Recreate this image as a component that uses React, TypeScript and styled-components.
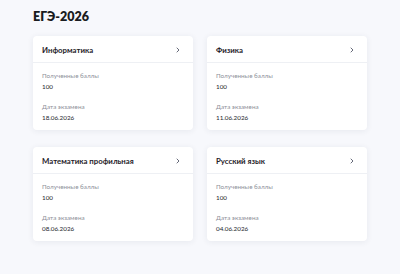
import styled, { createGlobalStyle } from "styled-components";

const exams = [
  { subject: "Информатика", score: 100, date: "18.06.2026" },
  { subject: "Физика", score: 100, date: "11.06.2026" },
  { subject: "Математика профильная", score: 100, date: "08.06.2026" },
  { subject: "Русский язык", score: 100, date: "04.06.2026" },
];

const GlobalStyle = createGlobalStyle`
  body {
    margin: 0;
    background: #f7f8fc;
    font-family: Lato, "Noto Sans", sans-serif;
    color: #1f2229;
  }
`;

function Chevron() {
  return (
    <svg width="4" height="6" viewBox="0 0 4 6" fill="none">
      <path d="M1 1l2 2-2 2" stroke="#55596a" strokeWidth="0.9" strokeLinecap="round" strokeLinejoin="round" />
    </svg>
  );
}

function App() {
  return (
    <Page>
      <GlobalStyle />
      <Heading>ЕГЭ-2026</Heading>
      <Grid>
        {exams.map((exam) => (
          <Card key={exam.subject}>
            <CardHeader>
              <Subject>{exam.subject}</Subject>
              <Chevron />
            </CardHeader>
            <CardBody>
              <Field>
                <Label>Полученные баллы</Label>
                <Value>{exam.score}</Value>
              </Field>
              <Field>
                <Label>Дата экзамена</Label>
                <Value>{exam.date}</Value>
              </Field>
            </CardBody>
          </Card>
        ))}
      </Grid>
    </Page>
  );
}

const Page = styled.div`
  min-height: 274px;
  padding: 8px 33px 0;
  box-sizing: border-box;
`;

const Heading = styled.h1`
  margin: 0;
  font-size: 12.5px;
  line-height: 18px;
  font-weight: 800;
  color: #1a1c21;
`;

const Grid = styled.div`
  display: grid;
  grid-template-columns: 160px 160px;
  column-gap: 14px;
  row-gap: 17px;
  margin-top: 10px;
`;

const Card = styled.div`
  background: #fff;
  border-radius: 4px;
  box-shadow: 0 1px 6px rgba(40, 50, 80, 0.08);
  height: 94px;
  display: flex;
  flex-direction: column;
`;

const CardHeader = styled.div`
  height: 24px;
  padding: 2px 13px 0 9px;
  display: flex;
  align-items: center;
  justify-content: space-between;
  border-bottom: 1px solid #eef0f4;
`;

const Subject = styled.span`
  font-size: 7.8px;
  font-weight: 700;
  color: #1f2229;
`;

const CardBody = styled.div`
  padding: 8px 9px 0;
  display: flex;
  flex-direction: column;
  gap: 10px;
`;

const Field = styled.div`
  display: flex;
  flex-direction: column;
  gap: 1px;
`;

const Label = styled.span`
  font-size: 6.3px;
  line-height: 10px;
  color: #8d9099;
`;

const Value = styled.span`
  font-size: 6.3px;
  line-height: 10px;
  color: #23262d;
`;

export default App;
